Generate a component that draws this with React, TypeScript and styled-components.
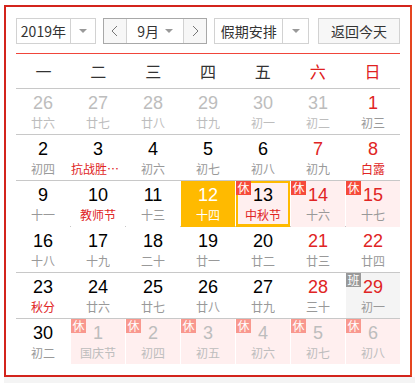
import React from 'react';
import styled, { createGlobalStyle, css } from 'styled-components';

type Cell = {
  d: number;
  lunar: string;
  fest?: boolean;
  out?: boolean;
  red?: boolean;
  badge?: '休' | '班';
  selected?: boolean;
  today?: boolean;
};

const c = (
  d: number,
  lunar: string,
  opts: Partial<Cell> = {}
): Cell => ({ d, lunar, ...opts });

const weeks: Cell[][] = [
  [
    c(26, '廿六', { out: true }),
    c(27, '廿七', { out: true }),
    c(28, '廿八', { out: true }),
    c(29, '廿九', { out: true }),
    c(30, '初一', { out: true }),
    c(31, '初二', { out: true }),
    c(1, '初三', { red: true }),
  ],
  [
    c(2, '初四'),
    c(3, '抗战胜利纪念日', { fest: true }),
    c(4, '初六'),
    c(5, '初七'),
    c(6, '初八'),
    c(7, '初九', { red: true }),
    c(8, '白露', { red: true, fest: true }),
  ],
  [
    c(9, '十一'),
    c(10, '教师节', { fest: true }),
    c(11, '十三'),
    c(12, '十四', { selected: true }),
    c(13, '中秋节', { fest: true, badge: '休', today: true }),
    c(14, '十六', { red: true, badge: '休' }),
    c(15, '十七', { red: true, badge: '休' }),
  ],
  [
    c(16, '十八'),
    c(17, '十九'),
    c(18, '二十'),
    c(19, '廿一'),
    c(20, '廿二'),
    c(21, '廿三', { red: true }),
    c(22, '廿四', { red: true }),
  ],
  [
    c(23, '秋分', { fest: true }),
    c(24, '廿六'),
    c(25, '廿七'),
    c(26, '廿八'),
    c(27, '廿九'),
    c(28, '三十', { red: true }),
    c(29, '初一', { red: true, badge: '班' }),
  ],
  [
    c(30, '初二'),
    c(1, '国庆节', { out: true, badge: '休' }),
    c(2, '初四', { out: true, badge: '休' }),
    c(3, '初五', { out: true, badge: '休' }),
    c(4, '初六', { out: true, badge: '休' }),
    c(5, '初七', { out: true, badge: '休' }),
    c(6, '初八', { out: true, badge: '休' }),
  ],
];

const weekdays = ['一', '二', '三', '四', '五', '六', '日'];

const Chevron = ({ dir }: { dir: 'left' | 'right' }) => (
  <svg width="7" height="12" viewBox="0 0 7 12">
    <polyline
      points={dir === 'left' ? '6,1 1,6 6,11' : '1,1 6,6 1,11'}
      fill="none"
      stroke="#777"
      strokeWidth="1"
    />
  </svg>
);

export default function App() {
  return (
    <>
      <GlobalStyle />
      <Page>
        <Calendar>
          <Toolbar>
            <Select $w={80}>
              <SelectText>2019年</SelectText>
              <ArrowBox $w={24}>
                <Caret />
              </ArrowBox>
            </Select>
            <MonthGroup>
              <NavButton>
                <Chevron dir="left" />
              </NavButton>
              <MonthSelect>
                <SelectText>9月</SelectText>
                <Caret />
              </MonthSelect>
              <NavButton>
                <Chevron dir="right" />
              </NavButton>
            </MonthGroup>
            <Select $w={95}>
              <SelectText>假期安排</SelectText>
              <ArrowBox $w={25}>
                <Caret />
              </ArrowBox>
            </Select>
            <TodayButton>返回今天</TodayButton>
          </Toolbar>
          <WeekHeader>
            {weekdays.map((w, i) => (
              <WeekDay key={w} $red={i >= 5}>
                {w}
              </WeekDay>
            ))}
          </WeekHeader>
          {weeks.map((week, wi) => (
            <WeekRow key={wi}>
              {week.map((cell, ci) => (
                <DayCell
                  key={ci}
                  $rest={cell.badge === '休'}
                  $work={cell.badge === '班'}
                  $selected={cell.selected}
                  $today={cell.today}
                >
                  {cell.badge && (
                    <Badge
                      $work={cell.badge === '班'}
                      $faded={cell.out}
                      $today={cell.today}
                    >
                      {cell.badge}
                    </Badge>
                  )}
                  <DayNum
                    $red={cell.red}
                    $out={cell.out}
                    $selected={cell.selected}
                  >
                    {cell.d}
                  </DayNum>
                  <Lunar
                    $fest={cell.fest}
                    $out={cell.out}
                    $selected={cell.selected}
                  >
                    {cell.lunar}
                  </Lunar>
                </DayCell>
              ))}
            </WeekRow>
          ))}
        </Calendar>
        <Footer />
      </Page>
    </>
  );
}

const GlobalStyle = createGlobalStyle`
  html, body {
    margin: 0;
    padding: 0;
    background: #fff;
  }
  body {
    font-family: "Liberation Sans", "Noto Sans CJK SC", sans-serif;
  }
`;

const Page = styled.div`
  padding: 5px 0 0 4px;
`;

const Calendar = styled.div`
  box-sizing: border-box;
  width: 408px;
  height: 372px;
  border: 2px solid #d3241c;
  border-right-color: #e54520;
  padding: 11px 10px 0 10px;
`;

const Footer = styled.div`
  height: 20px;
  background: #f4f4f4;
`;

const Toolbar = styled.div`
  display: flex;
  align-items: center;
  height: 26px;
  margin-bottom: 9px;
  font-size: 14px;
  color: #333;
`;

const Select = styled.div<{ $w: number }>`
  box-sizing: border-box;
  width: ${(p) => p.$w}px;
  height: 26px;
  display: flex;
  border: 1px solid #d2d2d2;
  background: #fff;
  margin-right: 7px;
`;

const SelectText = styled.span`
  flex: 1;
  display: flex;
  align-items: center;
  justify-content: center;
  font-family: "Noto Sans CJK SC", sans-serif;
  font-size: 14px;
  line-height: 24px;
  color: #333;
`;

const ArrowBox = styled.div<{ $w: number }>`
  width: ${(p) => p.$w}px;
  border-left: 1px solid #d2d2d2;
  display: flex;
  align-items: center;
  justify-content: center;
`;

const Caret = styled.span`
  width: 0;
  height: 0;
  border-left: 4px solid transparent;
  border-right: 4px solid transparent;
  border-top: 4px solid #999;
`;

const MonthGroup = styled.div`
  box-sizing: border-box;
  width: 105px;
  height: 26px;
  display: flex;
  border: 1px solid #a8a8a8;
  margin-right: 7px;
`;

const NavButton = styled.div`
  width: 22px;
  display: flex;
  align-items: center;
  justify-content: center;
  background: #f7f7f7;
`;

const MonthSelect = styled.div`
  flex: 1;
  display: flex;
  align-items: center;
  padding: 0 10px 0 4px;
  border-left: 1px solid #d2d2d2;
  border-right: 1px solid #d2d2d2;
  background: #fff;
`;

const TodayButton = styled.div`
  box-sizing: border-box;
  width: 82px;
  height: 26px;
  margin-left: 2px;
  border: 1px solid #d2d2d2;
  background: #f7f7f7;
  display: flex;
  align-items: center;
  justify-content: center;
  font-family: "Noto Sans CJK SC", sans-serif;
  font-size: 14px;
  color: #333;
`;

const WeekHeader = styled.div`
  display: grid;
  grid-template-columns: repeat(7, 1fr);
  height: 34px;
  border-top: 1px solid #f0453a;
  border-bottom: 1px solid #c8c8c8;
`;

const WeekDay = styled.div<{ $red?: boolean }>`
  display: flex;
  align-items: center;
  justify-content: center;
  font-family: "Noto Sans CJK SC", sans-serif;
  font-size: 16px;
  color: ${(p) => (p.$red ? '#e02020' : '#333')};
`;

const WeekRow = styled.div`
  display: grid;
  grid-template-columns: repeat(7, 1fr);
  column-gap: 1px;
  height: 45px;
  border-bottom: 1px solid #c8c8c8;
  &:last-child {
    border-bottom: none;
  }
`;

const DayCell = styled.div<{
  $rest?: boolean;
  $work?: boolean;
  $selected?: boolean;
  $today?: boolean;
}>`
  position: relative;
  box-sizing: border-box;
  min-width: 0;
  display: flex;
  flex-direction: column;
  align-items: center;
  padding-top: 3px;
  background: ${(p) =>
    p.$selected ? '#ffba00' : p.$rest ? '#ffefef' : p.$work ? '#f4f4f4' : '#fff'};
  ${(p) =>
    p.$today &&
    css`
      border: 2px solid #ffba00;
      border-bottom-width: 4px;
      padding-top: 1px;
    `}
`;

const Badge = styled.span<{ $work?: boolean; $faded?: boolean; $today?: boolean }>`
  position: absolute;
  top: ${(p) => (p.$today ? '-2px' : '0')};
  left: ${(p) => (p.$today ? '-2px' : '0')};
  width: 15px;
  height: 14px;
  display: flex;
  align-items: center;
  justify-content: center;
  font-family: "Noto Sans CJK SC", sans-serif;
  font-size: 12px;
  line-height: 14px;
  color: #fff;
  background: ${(p) => (p.$work ? '#999' : p.$faded ? '#f9988e' : '#f64a3a')};
`;

const DayNum = styled.span<{ $red?: boolean; $out?: boolean; $selected?: boolean }>`
  font-family: "Liberation Sans", Arial, sans-serif;
  font-size: 18px;
  line-height: 22px;
  color: ${(p) =>
    p.$selected ? '#fff' : p.$out ? '#bdbdbd' : p.$red ? '#e02424' : '#000'};
`;

const Lunar = styled.span<{ $fest?: boolean; $out?: boolean; $selected?: boolean }>`
  max-width: 100%;
  overflow: hidden;
  white-space: nowrap;
  text-overflow: ellipsis;
  font-family: "Noto Sans CJK SC", sans-serif;
  font-size: 12px;
  line-height: 18px;
  color: ${(p) =>
    p.$selected ? '#fff' : p.$out ? '#bdbdbd' : p.$fest ? '#e02424' : '#999'};
`;
